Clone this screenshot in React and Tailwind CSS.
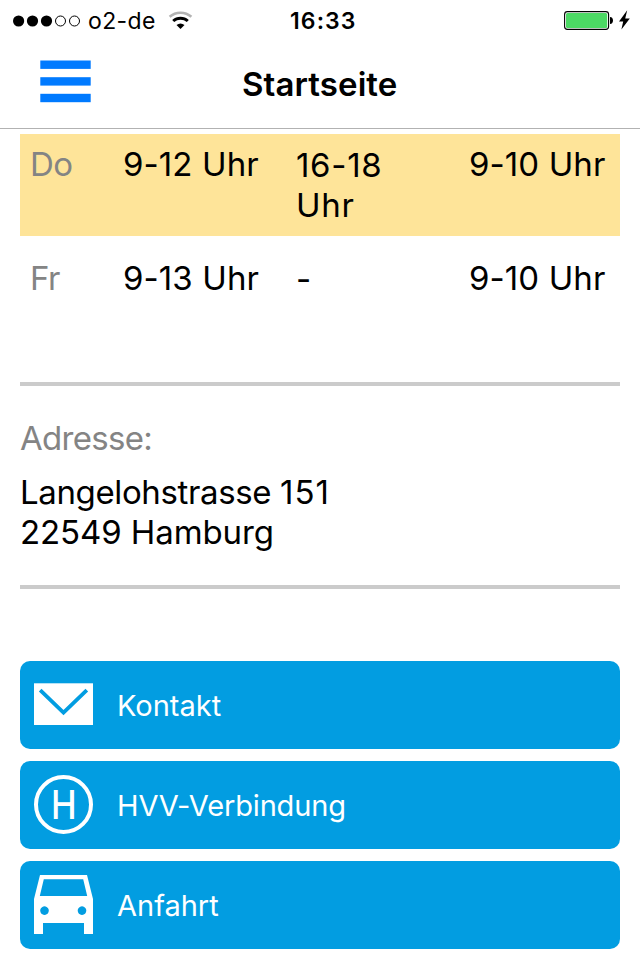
import React from "react";

function StatusBar() {
  return (
    <div className="flex h-10 shrink-0 items-center">
      <div className="flex w-[290px] items-center pl-[13px]">
        <svg width="68" height="12" viewBox="0 0 68 12" className="mt-px shrink-0">
          <circle cx="5.6" cy="6" r="5.6" />
          <circle cx="19.5" cy="6" r="5.6" />
          <circle cx="33.5" cy="6" r="5.6" />
          <circle cx="47.5" cy="6" r="5" fill="none" stroke="#000" />
          <circle cx="61.5" cy="6" r="5" fill="none" stroke="#000" />
        </svg>
        <span className="ml-[7px] mt-px w-[68px] whitespace-nowrap text-[23px] leading-[40px] tracking-[0.4px]">o2-de</span>
        <svg width="26" height="20" viewBox="0 0 26 20" className="ml-[12px] shrink-0" fill="none">
          <path d="M1.6 6.8 A16.5 16.5 0 0 1 23.4 6.8" stroke="#b3b3b3" strokeWidth="2.5" />
          <path d="M5.2 11 A11 11 0 0 1 19.8 11" stroke="#000" strokeWidth="3" />
          <path d="M8.5 15 A6.4 6.4 0 0 1 16.5 15 L12.5 19 Z" fill="#000" />
        </svg>
      </div>
      <span className="mt-px w-[274px] whitespace-nowrap text-[23px] font-semibold leading-[40px] tracking-[1.1px]">16:33</span>
      <svg width="70" height="24" viewBox="0 0 70 24" className="shrink-0">
        <rect x="0.6" y="3.6" width="44" height="17.8" rx="2.8" fill="#fff" stroke="#000" strokeWidth="1.1" />
        <rect x="2" y="5" width="41.2" height="15" rx="1.6" fill="#4cd964" />
        <path d="M46 9 C50 9 50 16 46 16 Z" />
        <path d="M63.2 2.3 L55 13.5 H59.2 L57.4 21.6 L65.8 10.4 H61.2 Z" />
      </svg>
    </div>
  );
}

function NavBar() {
  return (
    <header className="flex h-[89px] shrink-0 items-start border-b border-[#b2b2b2] pl-10">
      <button className="mt-[20px] w-[202px]" aria-label="Menu">
        <svg width="51" height="43" viewBox="0 0 51 43" fill="#007aff" className="block">
          <rect x="0.3" y="0.5" width="50.4" height="8.4" />
          <rect x="0.3" y="17.2" width="50.4" height="8.4" />
          <rect x="0.3" y="33.8" width="50.4" height="8.4" />
        </svg>
      </button>
      <h1 className="mt-[24px] text-[33px] font-semibold leading-[40px] tracking-[0.1px]">Startseite</h1>
    </header>
  );
}

function HoursRow({ day, morning, afternoon, phone, active }) {
  return (
    <div className={active ? "flex h-[102px] bg-[#fee499] pt-[11px]" : "flex h-[102px] pt-[11px]"}>
      <span className="-mt-px w-[103px] pl-[10px] tracking-[-0.6px] text-[#848484]">{day}</span>
      <span className="-mt-px w-[173px] whitespace-nowrap">{morning}</span>
      <span className="w-[100px] tracking-[0.7px]">{afternoon}</span>
      <span className="-mt-px ml-[73px] whitespace-nowrap">{phone}</span>
    </div>
  );
}

function MailIcon() {
  return (
    <svg width="59" height="59" viewBox="0 0 59 59">
      <rect y="8.3" width="59" height="41.7" fill="#fff" />
      <path d="M6.2 15.2 L29.5 37.5 L52.8 15.2" fill="none" stroke="#029de1" strokeWidth="3.8" />
    </svg>
  );
}

function StopIcon() {
  return (
    <div className="flex h-[59px] w-[59px] items-center justify-center rounded-full border-4 border-white text-[40px] font-medium leading-none">
      <span className="scale-x-[0.86]">H</span>
    </div>
  );
}

function CarIcon() {
  return (
    <svg width="59" height="59" viewBox="0 0 59 59" fill="#fff">
      <path
        fillRule="evenodd"
        d="M6 0 H53 L59 24 V59 H50 V48 H9 V59 H0 V24 Z M9.8 4.2 L5.8 21 H53.2 L49.2 4.2 Z M10.5 31.3 a4.3 4.3 0 1 0 0.01 0 Z M48 31.3 a4.3 4.3 0 1 0 0.01 0 Z"
      />
    </svg>
  );
}

function ActionButton({ icon, label, spacing }) {
  return (
    <button className="flex h-[88px] w-full items-start rounded-[10px] bg-[#029de1] pl-[14px] pt-[14px] text-white">
      <span className="flex w-[83px]">{icon}</span>
      <span className={`mt-[11px] whitespace-nowrap text-[29px] leading-[40px] ${spacing}`}>{label}</span>
    </button>
  );
}

export default function App() {
  return (
    <div className="flex h-[960px] w-[640px] flex-col overflow-hidden bg-white font-['Inter',sans-serif] text-black">
      <StatusBar />
      <NavBar />
      <main className="px-5 pt-[5px] text-[33px] leading-[40px]">
        <section className="flex flex-col gap-[12px] tracking-[0.1px]">
          <HoursRow day="Do" morning="9-12 Uhr" afternoon="16-18 Uhr" phone="9-10 Uhr" active />
          <HoursRow day="Fr" morning="9-13 Uhr" afternoon="-" phone="9-10 Uhr" />
        </section>
        <hr className="mt-[32px] border-0 border-t-4 border-[#cbcbcb]" />
        <section className="h-[199px] pt-[32px]">
          <h2 className="tracking-[-0.7px] text-[#848484]">Adresse:</h2>
          <p className="mt-[14px] tracking-[-0.37px]">
            Langelohstrasse <span className="tracking-[1px]">151</span>
          </p>
          <p className="tracking-[-0.1px]">22549 Hamburg</p>
        </section>
        <hr className="border-0 border-t-4 border-[#cbcbcb]" />
        <nav className="mt-[72px] flex flex-col gap-3">
          <ActionButton icon={<MailIcon />} label="Kontakt" spacing="tracking-normal" />
          <ActionButton icon={<StopIcon />} label="HVV-Verbindung" spacing="tracking-[-0.15px]" />
          <ActionButton icon={<CarIcon />} label="Anfahrt" spacing="tracking-normal" />
        </nav>
      </main>
    </div>
  );
}
